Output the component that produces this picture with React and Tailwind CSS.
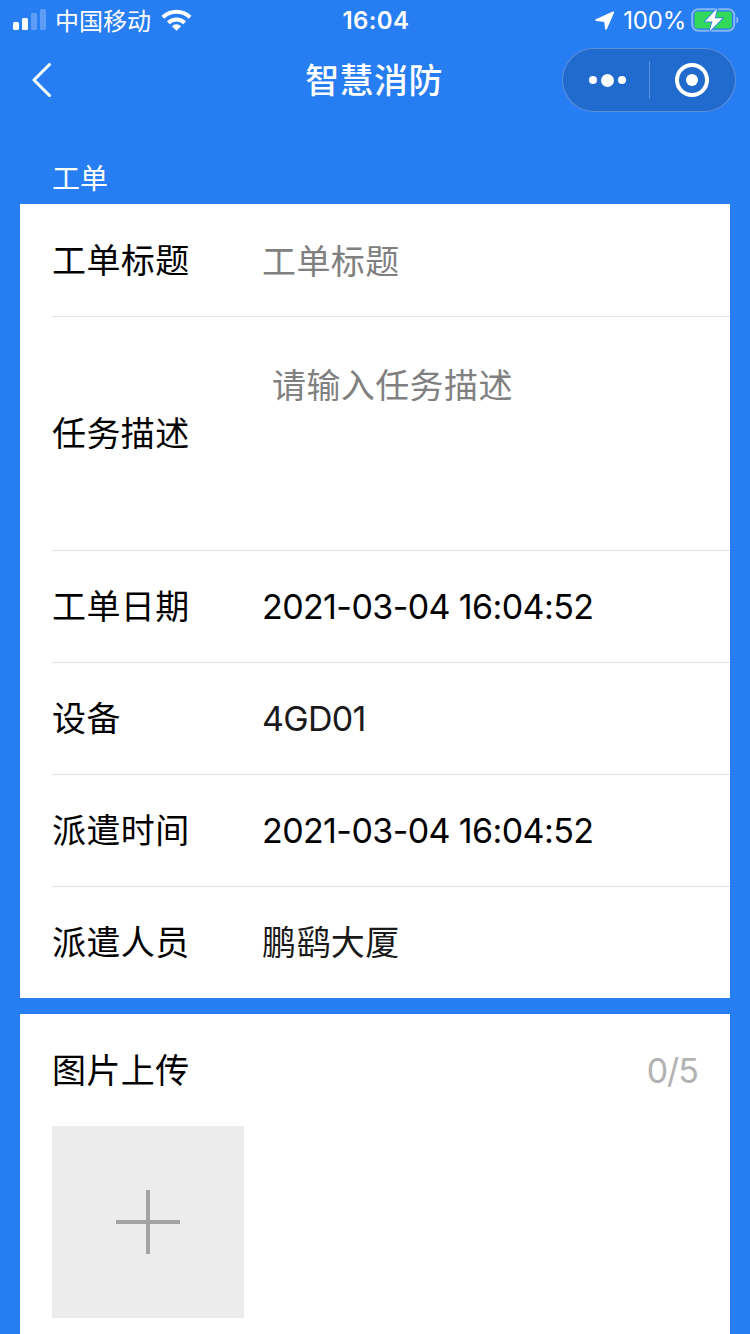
import React from 'react';

const rows = [
  { label: '工单日期', value: '2021-03-04 16:04:52', style: 'text-black tracking-[-0.6px]' },
  { label: '设备', value: '4GD01', style: 'text-[#1a1a1a] tracking-[-0.7px]' },
  { label: '派遣时间', value: '2021-03-04 16:04:52', style: 'text-black tracking-[-0.6px]' },
  { label: '派遣人员', value: '鹏鹞大厦', style: 'text-[#1a1a1a]' },
];

const StatusBar = () => (
  <div className="h-10 grid grid-cols-[1fr_auto_1fr] items-center pl-[13px] pr-[11px]">
    <div className="flex items-center">
      <svg className="w-[33px] h-[22px]" viewBox="0 0 33 22" fill="#fff">
        <rect x="0" y="13" width="6" height="8" rx="1.5" />
        <rect x="9" y="9" width="6" height="12" rx="1.5" />
        <rect x="18" y="4" width="6" height="17" rx="1.5" opacity="0.25" />
        <rect x="27" y="0" width="6" height="21" rx="1.5" opacity="0.25" />
      </svg>
      <span className="ml-[9px] pt-[3px] text-[24px] leading-[37px] font-normal whitespace-nowrap">中国移动</span>
      <svg className="ml-[10px] w-[31px] h-[22px]" viewBox="0 0 31 22" fill="none" stroke="#fff" strokeWidth="4">
        <path d="M1.9 8.200a19.400 19.400 0 0 1 27.200 0" />
        <path d="M7.300 13.800a11.700 11.700 0 0 1 16.400 0" />
        <path d="M15.500 21.800l-4.600-4.600a6.600 6.600 0 0 1 9.200 0z" fill="#fff" stroke="none" />
      </svg>
    </div>
    <span className="pt-[2px] text-[24px] leading-[38px] font-semibold tracking-[0.4px]">16:04</span>
    <div className="flex items-center justify-end">
      <svg className="w-[20px] h-[20px]" viewBox="0 0 20 20">
        <path d="M1.2 10L18.2 2.400L11 18.800L10 11Z" fill="#fff" stroke="#fff" strokeWidth="1.8" strokeLinejoin="round" />
      </svg>
      <span className="ml-[8px] pt-[2px] text-[24px] leading-[38px] tracking-[-0.2px]">100%</span>
      <svg className="ml-[5px] w-[48px] h-[24px]" viewBox="0 0 48 24">
        <rect x="1.200" y="1.200" width="42" height="21.600" rx="6" fill="none" stroke="#fff" strokeOpacity="0.45" strokeWidth="2" />
        <rect x="3.500" y="3.500" width="37.400" height="17" rx="3" fill="#32d95a" />
        <path d="M45.500 8.500c2.400 1 2.400 6 0 7z" fill="#fff" fillOpacity="0.5" />
        <path d="M26 0.500L14 13.400h7.400L18.400 23.500L31.500 10.200h-7.600z" fill="#fff" stroke="#277df2" strokeWidth="1.600" paintOrder="stroke" />
      </svg>
    </div>
  </div>
);

const NavBar = () => (
  <div className="h-20 grid grid-cols-[1fr_auto_1fr] items-center px-[14px]">
    <svg className="ml-[18px] w-5 h-9" viewBox="0 0 20 36" fill="none" stroke="#fff" strokeWidth="3" strokeLinecap="round" strokeLinejoin="round">
      <path d="M17.500 2.500L2 18l15.500 15.500" />
    </svg>
    <h1 className="pt-[2px] text-[34px] leading-[78px] font-medium tracking-[0.4px] -ml-[2px]">智慧消防</h1>
    <div className="justify-self-end w-[174px] h-16 rounded-full border border-white/25 bg-[#226bce] flex items-center">
      <div className="w-[86px] flex items-center justify-center gap-1 pl-[3px]">
        <span className="w-2 h-2 rounded-full bg-white" />
        <span className="w-[13px] h-[13px] rounded-full bg-white" />
        <span className="w-2 h-2 rounded-full bg-white" />
      </div>
      <div className="w-px h-[38px] bg-white/25" />
      <div className="flex-1 flex items-center justify-center pr-px">
        <div className="w-[34px] h-[34px] rounded-full border-4 border-white flex items-center justify-center">
          <span className="w-3 h-3 rounded-full bg-white" />
        </div>
      </div>
    </div>
  </div>
);

const App = () => {
  return (
    <div className="h-[1334px] overflow-hidden bg-[#277df2] text-white font-['Inter','Noto_Sans_CJK_SC',sans-serif]">
      <StatusBar />
      <NavBar />

      <div className="h-[84px] pl-[52px] pt-[39px]">
        <h2 className="text-[28px] leading-10 font-normal">工单</h2>
      </div>

      <div className="mx-5 h-[794px] bg-white pl-8 text-[34px] text-black tracking-[0.4px]">
        <div className="h-[113px] flex items-center border-b border-[#e3e3e3]">
          <span className="w-[210px]">工单标题</span>
          <span className="pt-[2px] text-[#808080]">工单标题</span>
        </div>
        <div className="h-[234px] flex items-center border-b border-[#e3e3e3]">
          <span className="w-[210px]">任务描述</span>
          <div className="h-full pt-[43px] pl-[10px] text-[#808080]">请输入任务描述</div>
        </div>
        {rows.map((row) => (
          <div key={row.label} className="h-28 flex items-center border-b border-[#e3e3e3] last:border-b-0 last:h-[111px]">
            <span className="w-[210px]">{row.label}</span>
            <span className={row.style}>{row.value}</span>
          </div>
        ))}
      </div>

      <div className="mx-5 mt-4 h-[320px] bg-white px-8 text-[34px] text-black">
        <div className="h-28 flex items-center justify-between">
          <span className="pt-px tracking-[0.4px]">图片上传</span>
          <span className="text-[#b2b2b2] tracking-[-1px]">0/5</span>
        </div>
        <button className="w-48 h-48 bg-[#ececec] flex items-center justify-center">
          <svg className="w-16 h-16" viewBox="0 0 64 64" stroke="#a3a3a3" strokeWidth="4">
            <path d="M32 0v64M0 32h64" />
          </svg>
        </button>
      </div>
    </div>
  );
};

export default App;
